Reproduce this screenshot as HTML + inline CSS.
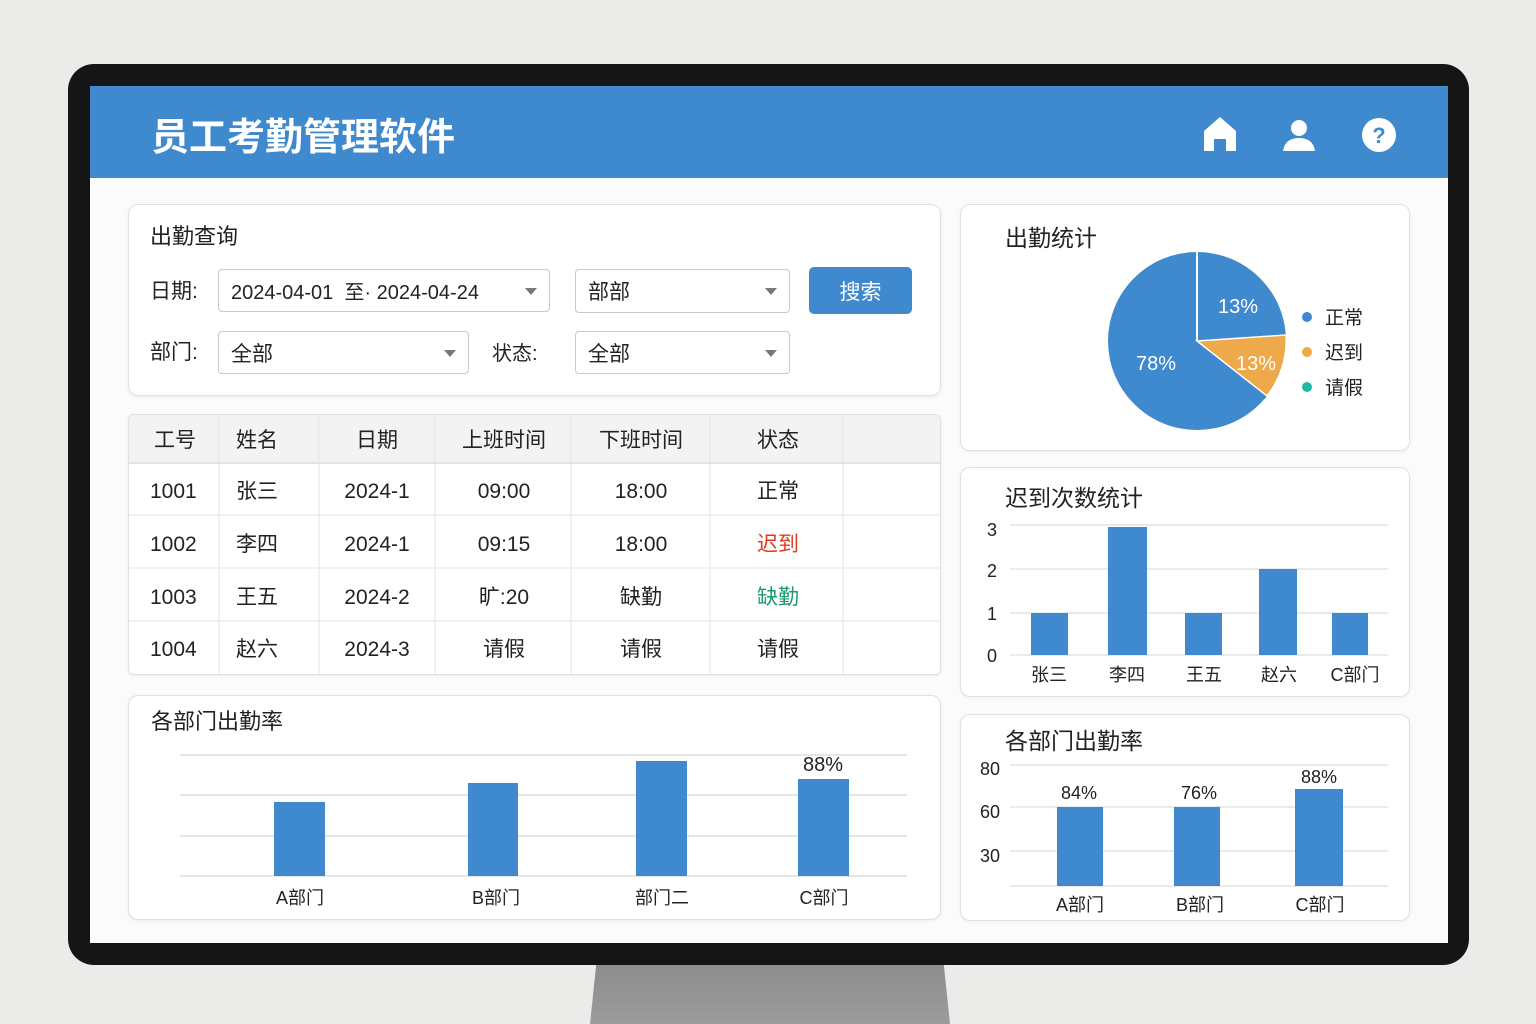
<!DOCTYPE html>
<html><head><meta charset="utf-8"><style>
*{margin:0;padding:0;box-sizing:border-box}
body{width:1536px;height:1024px;background:#ebebe9;position:relative;overflow:hidden;font-family:"Liberation Sans","Noto Sans CJK SC",sans-serif;color:#222}
.a{position:absolute}
.panel{position:absolute;background:#fff;border:1px solid #e0e0e0;border-radius:10px;box-shadow:0 1px 3px rgba(0,0,0,.06)}
.t{position:absolute;white-space:nowrap}
.sel{position:absolute;background:#fff;border:1px solid #c9c9c9;border-radius:4px;font-size:21px;padding-left:12px;display:flex;align-items:center}
.sel:after{content:"";position:absolute;right:12px;top:50%;margin-top:-3px;border-left:6px solid transparent;border-right:6px solid transparent;border-top:7px solid #777}
</style></head><body>
<div class="a" style="left:590px;top:955px;width:360px;height:69px;background:linear-gradient(#8a8a8a,#9c9c9c);clip-path:polygon(2% 0,98% 0,100% 100%,0 100%)"></div>
<div class="a" style="left:68px;top:64px;width:1401px;height:901px;background:#151515;border-radius:26px"></div>
<div class="a" style="left:90px;top:86px;width:1358px;height:857px;background:#fbfbfb"></div>
<div class="a" style="left:90px;top:86px;width:1358px;height:92px;background:#3f89ce"></div>
<div class="t" style="left:151px;top:106px;font-size:38px;font-weight:bold;color:#fff;letter-spacing:0px">员工考勤管理软件</div>
<svg class="a" style="left:1195px;top:110px" width="210" height="50" viewBox="0 0 210 50">
<path d="M9 21 L25 7 L41 21 L41 41 L31 41 L31 29 L19 29 L19 41 L9 41 Z" fill="#fff"/>
<circle cx="104" cy="18" r="8" fill="#fff"/>
<path d="M88 41 Q90 28 104 28 Q118 28 120 41 Z" fill="#fff"/>
<circle cx="184" cy="25" r="17" fill="#fff"/>
<text x="184" y="33" font-size="22" font-weight="bold" fill="#3f89ce" text-anchor="middle" font-family="Liberation Sans">?</text>
</svg>

<div class="panel" style="left:128px;top:204px;width:813px;height:192px"></div>
<div class="t" style="left:150px;top:219px;font-size:22px">出勤查询</div>
<div class="t" style="left:150px;top:275px;font-size:21px">日期:</div>
<div class="sel" style="left:218px;top:269px;width:332px;height:43px;font-size:20px">2024-04-01 &nbsp;至· 2024-04-24</div>
<div class="sel" style="left:575px;top:269px;width:215px;height:44px">部部</div>
<div class="a" style="left:809px;top:267px;width:103px;height:47px;background:#3f89ce;border-radius:5px;color:#fff;font-size:21px;display:flex;align-items:center;justify-content:center">搜索</div>
<div class="t" style="left:150px;top:336px;font-size:21px">部门:</div>
<div class="sel" style="left:218px;top:331px;width:251px;height:43px">全部</div>
<div class="t" style="left:492px;top:337px;font-size:20px">状态:</div>
<div class="sel" style="left:575px;top:331px;width:215px;height:43px">全部</div>

<div class="panel" style="left:128px;top:414px;width:813px;height:261px;overflow:hidden;border-radius:6px">
<div class="a" style="left:0;top:0;width:813px;height:49px;background:#f3f3f3;border-bottom:2px solid #e3e3e3"></div>
</div>
<svg class="a" style="left:128px;top:414px" width="813" height="261">
<g stroke="#e3e3e3" stroke-width="1">
<line x1="91" y1="0" x2="91" y2="261"/><line x1="191" y1="0" x2="191" y2="261"/><line x1="307" y1="0" x2="307" y2="261"/><line x1="443" y1="0" x2="443" y2="261"/><line x1="582" y1="0" x2="582" y2="261"/><line x1="715" y1="0" x2="715" y2="261"/>
<line x1="0" y1="101" x2="813" y2="101"/><line x1="0" y1="154" x2="813" y2="154"/><line x1="0" y1="207" x2="813" y2="207"/>
</g>
<g font-size="21" fill="#222" font-family="Liberation Sans,Noto Sans CJK SC,sans-serif">
<text x="26" y="33">工号</text><text x="108" y="33">姓名</text><text x="249" y="33" text-anchor="middle">日期</text><text x="376" y="33" text-anchor="middle">上班时间</text><text x="513" y="33" text-anchor="middle">下班时间</text><text x="650" y="33" text-anchor="middle">状态</text>
<text x="22" y="84">1001</text><text x="108" y="84">张三</text><text x="249" y="84" text-anchor="middle">2024-1</text><text x="376" y="84" text-anchor="middle">09:00</text><text x="513" y="84" text-anchor="middle">18:00</text><text x="650" y="84" text-anchor="middle">正常</text>
<text x="22" y="137">1002</text><text x="108" y="137">李四</text><text x="249" y="137" text-anchor="middle">2024-1</text><text x="376" y="137" text-anchor="middle">09:15</text><text x="513" y="137" text-anchor="middle">18:00</text><text x="650" y="137" text-anchor="middle" fill="#e03a1e">迟到</text>
<text x="22" y="190">1003</text><text x="108" y="190">王五</text><text x="249" y="190" text-anchor="middle">2024-2</text><text x="376" y="190" text-anchor="middle">旷:20</text><text x="513" y="190" text-anchor="middle">缺勤</text><text x="650" y="190" text-anchor="middle" fill="#1d9a6c">缺勤</text>
<text x="22" y="242">1004</text><text x="108" y="242">赵六</text><text x="249" y="242" text-anchor="middle">2024-3</text><text x="376" y="242" text-anchor="middle">请假</text><text x="513" y="242" text-anchor="middle">请假</text><text x="650" y="242" text-anchor="middle">请假</text>
</g></svg>

<div class="panel" style="left:128px;top:695px;width:813px;height:225px"></div>
<div class="t" style="left:151px;top:704px;font-size:22px">各部门出勤率</div>
<svg class="a" style="left:0;top:0" width="1536" height="1024" font-family="Liberation Sans,Noto Sans CJK SC,sans-serif">
<g stroke="#dedede" stroke-width="1.5">
<line x1="180" y1="755" x2="907" y2="755"/><line x1="180" y1="795" x2="907" y2="795"/><line x1="180" y1="836" x2="907" y2="836"/><line x1="180" y1="876" x2="907" y2="876"/>
</g>
<g fill="#3f89ce">
<rect x="274" y="802" width="51" height="74"/><rect x="468" y="783" width="50" height="93"/><rect x="636" y="761" width="51" height="115"/><rect x="798" y="779" width="51" height="97"/>
</g>
<g font-size="18" fill="#222" text-anchor="middle">
<text x="300" y="904">A部门</text><text x="496" y="904">B部门</text><text x="662" y="904">部门二</text><text x="824" y="904">C部门</text>
<text x="823" y="771" font-size="20">88%</text>
</g>
</svg>

<div class="panel" style="left:960px;top:204px;width:450px;height:247px"></div>
<div class="t" style="left:1005px;top:219px;font-size:23px">出勤统计</div>
<div class="panel" style="left:960px;top:467px;width:450px;height:230px"></div>
<div class="t" style="left:1005px;top:479px;font-size:23px">迟到次数统计</div>
<div class="panel" style="left:960px;top:714px;width:450px;height:207px"></div>
<div class="t" style="left:1005px;top:722px;font-size:23px">各部门出勤率</div>

<svg class="a" style="left:0;top:0" width="1536" height="1024" font-family="Liberation Sans,Noto Sans CJK SC,sans-serif">
<circle cx="1197" cy="341" r="89" fill="#3f89ce"/>
<path d="M1197 341 L1286 335 A89 89 0 0 1 1267 396 Z" fill="#eea94a" stroke="#fff" stroke-width="1.5"/>
<line x1="1197" y1="341" x2="1197" y2="252" stroke="#fff" stroke-width="2"/>
<g font-size="20" fill="#fff" text-anchor="middle"><text x="1238" y="313">13%</text><text x="1256" y="370">13%</text><text x="1156" y="370">78%</text></g>
<circle cx="1307" cy="317" r="5" fill="#3f89ce"/><circle cx="1307" cy="352" r="5" fill="#eea94a"/><circle cx="1307" cy="387" r="5" fill="#1fb7a8"/>
<g font-size="19" fill="#222"><text x="1325" y="324">正常</text><text x="1325" y="359">迟到</text><text x="1325" y="394">请假</text></g>

<g stroke="#dedede" stroke-width="1.3">
<line x1="1010" y1="525" x2="1388" y2="525"/><line x1="1010" y1="569" x2="1388" y2="569"/><line x1="1010" y1="613" x2="1388" y2="613"/><line x1="1010" y1="655" x2="1388" y2="655"/>
</g>
<g fill="#3f89ce">
<rect x="1031" y="613" width="37" height="42"/><rect x="1108" y="527" width="39" height="128"/><rect x="1185" y="613" width="37" height="42"/><rect x="1259" y="569" width="38" height="86"/><rect x="1332" y="613" width="36" height="42"/>
</g>
<g font-size="18" fill="#222" text-anchor="middle">
<text x="992" y="536">3</text><text x="992" y="577">2</text><text x="992" y="620">1</text><text x="992" y="662">0</text>
<text x="1049" y="681">张三</text><text x="1127" y="681">李四</text><text x="1204" y="681">王五</text><text x="1279" y="681">赵六</text><text x="1355" y="681">C部门</text>
</g>

<g stroke="#dedede" stroke-width="1.3">
<line x1="1010" y1="765" x2="1388" y2="765"/><line x1="1010" y1="807" x2="1388" y2="807"/><line x1="1010" y1="851" x2="1388" y2="851"/><line x1="1010" y1="886" x2="1388" y2="886"/>
</g>
<g fill="#3f89ce">
<rect x="1057" y="807" width="46" height="79"/><rect x="1174" y="807" width="46" height="79"/><rect x="1295" y="789" width="48" height="97"/>
</g>
<g font-size="18" fill="#222" text-anchor="middle">
<text x="990" y="775">80</text><text x="990" y="818">60</text><text x="990" y="862">30</text>
<text x="1079" y="799">84%</text><text x="1199" y="799">76%</text><text x="1319" y="783">88%</text>
<text x="1080" y="911">A部门</text><text x="1200" y="911">B部门</text><text x="1320" y="911">C部门</text>
</g>
</svg>
</body></html>
